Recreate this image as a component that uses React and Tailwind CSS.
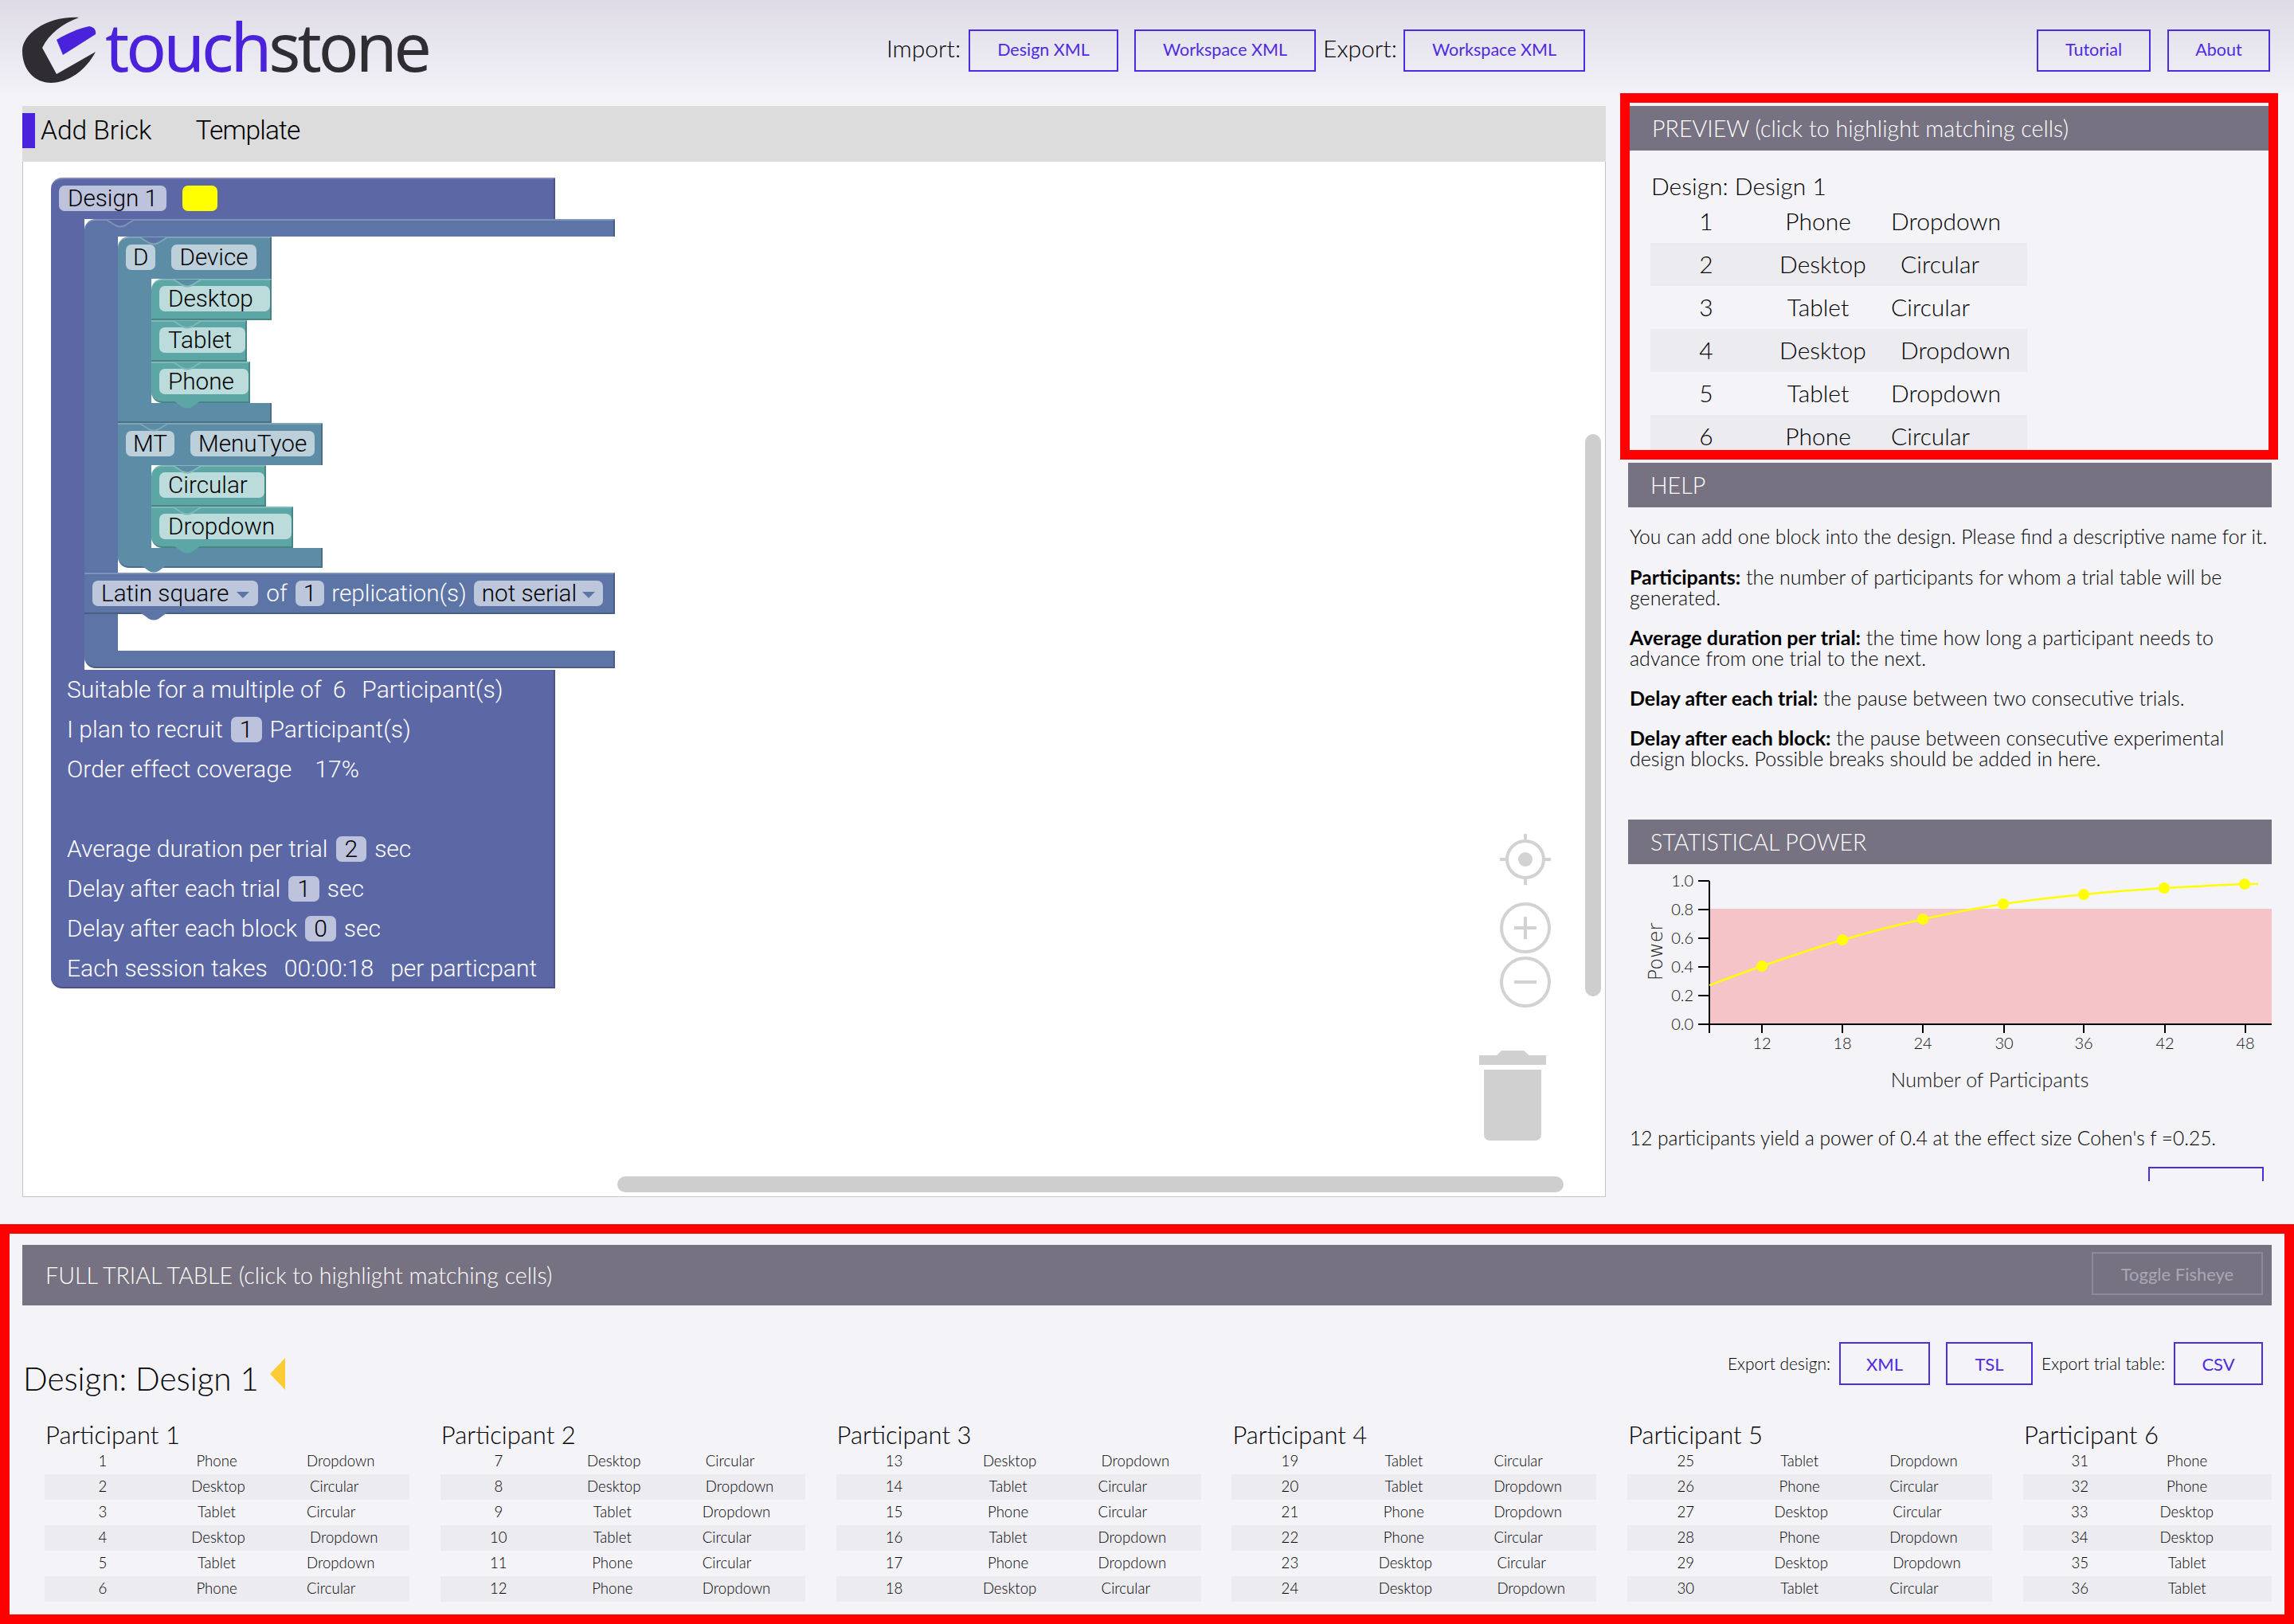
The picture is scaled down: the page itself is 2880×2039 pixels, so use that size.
import React from "react";

const ACCENT_BTN = "flex items-center justify-center border-2 border-[#4f2be0] text-[#4f2be0] font-normal";

const TONES = {
  design: { bg: "bg-[#5c67a6]", edge: "border-t-2 border-t-[#8089b9]", side: "border-r-2 border-b-2 border-r-[#4a5385] border-b-[#4a5385]", field: "bg-[#bdc2dd]", hex: "#5c67a6", line: "#8089b9" },
  block: { bg: "bg-[#5c74a6]", edge: "border-t-2 border-t-[#7f92b9]", side: "border-r-2 border-b-2 border-r-[#4a5d85] border-b-[#4a5d85]", field: "bg-[#bcc7dc]", hex: "#5c74a6", line: "#7f92b9" },
  factor: { bg: "bg-[#5c8ca6]", edge: "border-t-2 border-t-[#7fa5b9]", side: "border-r-2 border-b-2 border-r-[#4a7085] border-b-[#4a7085]", field: "bg-[#bcd0dc]", hex: "#5c8ca6", line: "#7fa5b9" },
  value: { bg: "bg-[#5ca6a6]", edge: "border-t-2 border-t-[#7fb9b9]", side: "border-r-2 border-b-2 border-r-[#4a8585] border-b-[#4a8585]", field: "bg-[#bcdbdb]", hex: "#5ca6a6", line: "#7fb9b9" },
};

const PREVIEW_ROWS = [
  [1, "Phone", "Dropdown"],
  [2, "Desktop", "Circular"],
  [3, "Tablet", "Circular"],
  [4, "Desktop", "Dropdown"],
  [5, "Tablet", "Dropdown"],
  [6, "Phone", "Circular"],
];

const PARTICIPANTS = [
  { name: "Participant 1", rows: PREVIEW_ROWS },
  {
    name: "Participant 2",
    rows: [
      [7, "Desktop", "Circular"],
      [8, "Desktop", "Dropdown"],
      [9, "Tablet", "Dropdown"],
      [10, "Tablet", "Circular"],
      [11, "Phone", "Circular"],
      [12, "Phone", "Dropdown"],
    ],
  },
  {
    name: "Participant 3",
    rows: [
      [13, "Desktop", "Dropdown"],
      [14, "Tablet", "Circular"],
      [15, "Phone", "Circular"],
      [16, "Tablet", "Dropdown"],
      [17, "Phone", "Dropdown"],
      [18, "Desktop", "Circular"],
    ],
  },
  {
    name: "Participant 4",
    rows: [
      [19, "Tablet", "Circular"],
      [20, "Tablet", "Dropdown"],
      [21, "Phone", "Dropdown"],
      [22, "Phone", "Circular"],
      [23, "Desktop", "Circular"],
      [24, "Desktop", "Dropdown"],
    ],
  },
  {
    name: "Participant 5",
    rows: [
      [25, "Tablet", "Dropdown"],
      [26, "Phone", "Circular"],
      [27, "Desktop", "Circular"],
      [28, "Phone", "Dropdown"],
      [29, "Desktop", "Dropdown"],
      [30, "Tablet", "Circular"],
    ],
  },
  {
    name: "Participant 6",
    narrow: true,
    rows: [
      [31, "Phone"],
      [32, "Phone"],
      [33, "Desktop"],
      [34, "Desktop"],
      [35, "Tablet"],
      [36, "Tablet"],
    ],
  },
];

const POWER_POINTS = [
  [2146, 1237],
  [2212, 1213],
  [2313, 1180],
  [2414, 1154],
  [2515, 1135],
  [2616, 1123],
  [2717, 1115],
  [2818, 1110],
  [2835, 1110],
];

function Logo() {
  return (
    <div className="flex items-start">
      <svg width="96" height="90" viewBox="28 18 96 90" className="mt-[18px] flex-none">
        <path d="M99 22 C60 20 28 42 28 64 C28 88 44 104 64 104 C86 104 108 88 120 65 L71 93 L53 60 C62 42 78 30 99 22 Z" fill="#2f2d31" />
        <path d="M71 50 C84 42 98 36 112 33 C118 34 121 38 120 43 L79 69 Z" fill="#4a22dc" />
      </svg>
      <div className="ml-[8px] mt-[8px] text-[84px] leading-[100px] font-['Noto_Sans'] font-normal tracking-[-4px] whitespace-nowrap">
        <span className="text-[#4a22dc]">touch</span>
        <span className="text-[#2f2d31]">stone</span>
      </div>
    </div>
  );
}

function Header() {
  return (
    <div className="h-[117px] flex-none bg-gradient-to-b from-[#dedbe6] to-[#f2f1f7] flex items-start pl-[28px]">
      <Logo />
      <div className="flex items-center absolute left-[1113px] top-[37px] h-[53px] text-[30px] text-black">
        <span className="w-[103px] pb-[6px]">Import:</span>
        <button className={`${ACCENT_BTN} w-[188px] h-[53px] text-[21.5px] pb-[2px]`}>Design XML</button>
        <button className={`${ACCENT_BTN} w-[228px] h-[53px] text-[21.5px] pb-[2px] ml-[20px]`}>Workspace XML</button>
        <span className="w-[101px] ml-[9px] pb-[6px]">Export:</span>
        <button className={`${ACCENT_BTN} w-[228px] h-[53px] text-[21.5px] pb-[2px]`}>Workspace XML</button>
      </div>
      <div className="flex absolute left-[2557px] top-[37px] gap-[21px]">
        <button className={`${ACCENT_BTN} w-[143px] h-[53px] text-[21.5px] pb-[2px]`}>Tutorial</button>
        <button className={`${ACCENT_BTN} w-[129px] h-[53px] text-[21.5px] pb-[2px]`}>About</button>
      </div>
    </div>
  );
}

// V dent at the top of a block: the block above pokes its tab into it
function Notch({ parent, child, left = 28 }) {
  return (
    <svg width="34" height="11" viewBox="0 0 34 11" className="absolute -top-[2px] z-10" style={{ left }}>
      <path d="M0 1 L11 8 Q17 11 23 8 L34 1 Z" fill={TONES[parent].hex} />
      <path d="M0 1 L11 8 Q17 11 23 8 L34 1" fill="none" stroke={TONES[child].line} strokeWidth="2" />
    </svg>
  );
}

function Tab({ tone, left = 28, bottom = -9 }) {
  return (
    <svg width="34" height="11" viewBox="0 0 34 11" className="absolute z-10" style={{ left, bottom }}>
      <path d="M0 0 L11 8 Q17 11 23 8 L34 0 Z" fill={TONES[tone].hex} />
    </svg>
  );
}

function Field({ tone, children, className = "px-[11px]" }) {
  return (
    <div className={`h-[32px] rounded-[7px] flex items-center text-black flex-none ${TONES[tone].field} ${className}`}>
      {children}
    </div>
  );
}

function Caret({ tone, className = "ml-[10px]" }) {
  return (
    <svg width="16" height="8" viewBox="0 0 16 8" className={`mt-[3px] ${className}`}>
      <path d="M0 0 H16 L8 8 Z" fill={TONES[tone].hex} />
    </svg>
  );
}

function ValueBlock({ label, width, first, last }) {
  const t = TONES.value;
  return (
    <div
      className={`relative h-[52px] pl-[10px] pt-[7px] ${t.bg} ${t.edge} ${t.side} ${first ? "rounded-tl-[14px]" : ""} ${last ? "rounded-bl-[14px]" : ""}`}
      style={{ width }}
    >
      <Notch parent={first ? "factor" : "value"} child="value" />
      <Field tone="value">{label}</Field>
      {last && <Tab tone="value" bottom={-10} />}
    </div>
  );
}

function FactorBlock({ code, name, width, values, first, gap }) {
  const t = TONES.factor;
  return (
    <div className="relative" style={{ width }}>
      <div className={`relative h-[53px] pl-[10px] pt-[8px] flex ${t.bg} ${t.edge} border-r-2 border-r-[#4a7085] ${first ? "rounded-tl-[14px]" : ""}`}>
        <Notch parent={first ? "block" : "factor"} child="factor" />
        <Field tone="factor" className="px-[9px]">{code}</Field>
        <Field tone="factor" className="ml-[20px] px-[10px]">{name}</Field>
      </div>
      <div className="flex">
        <div className={`w-[42px] flex-none ${t.bg}`} />
        <div className="flex flex-col">
          {values.map((v, i) => (
            <ValueBlock key={v.label} label={v.label} width={v.width} first={i === 0} last={i === values.length - 1} />
          ))}
        </div>
      </div>
      <div className={`relative h-[25px] ${t.bg} ${t.side} ${gap ? "rounded-bl-[14px]" : ""}`}>
        {gap && <Tab tone="factor" bottom={-9} />}
      </div>
    </div>
  );
}

function DesignBlocks() {
  const d = TONES.design;
  const b = TONES.block;
  return (
    <div className="absolute left-[35px] top-[20px] w-[708px] font-['Roboto'] font-light text-[29.7px] leading-none">
      <div className={`h-[52px] w-[633px] pl-[10px] pt-[8px] flex rounded-tl-[14px] ${d.bg} ${d.edge} border-r-2 border-r-[#4a5385]`}>
        <Field tone="design">Design 1</Field>
        <div className="ml-[20px] w-[44px] h-[32px] rounded-[7px] bg-[#ffff00]" />
      </div>
      <div className="flex">
        <div className={`w-[42px] flex-none ${d.bg}`} />
        <div className="w-[666px] pb-[2px]">
          <div className={`relative h-[22px] rounded-tl-[14px] ${b.bg} ${b.edge} border-r-2 border-r-[#4a5d85]`}>
            <Notch parent="design" child="block" />
          </div>
          <div className="flex">
            <div className={`w-[42px] flex-none ${b.bg}`} />
            <div className="flex flex-col pb-[6px]">
              <FactorBlock
                first
                code="D"
                name="Device"
                width={193}
                values={[
                  { label: "Desktop", width: 151 },
                  { label: "Tablet", width: 120 },
                  { label: "Phone", width: 124 },
                ]}
              />
              <FactorBlock
                gap
                code="MT"
                name="MenuTyoe"
                width={257}
                values={[
                  { label: "Circular", width: 144 },
                  { label: "Dropdown", width: 178 },
                ]}
              />
            </div>
          </div>
          <div className={`h-[52px] pl-[10px] flex items-center text-white ${b.bg} ${b.edge} ${b.side}`}>
            <Field tone="block">
              Latin square
              <Caret tone="block" />
            </Field>
            <span className="ml-[10px]">of</span>
            <Field tone="block" className="ml-[10px] px-[10px]">1</Field>
            <span className="ml-[9px]">replication(s)</span>
            <Field tone="block" className="ml-[9px] px-[10px]">
              not serial
              <Caret tone="block" className="ml-[7px]" />
            </Field>
          </div>
          <div className="relative flex h-[46px]">
            <div className={`w-[42px] flex-none ${b.bg}`} />
            <Tab tone="block" left={70} bottom={37} />
            <div className="flex-1 rounded-l-[12px] bg-white" />
          </div>
          <div className={`h-[22px] rounded-bl-[14px] ${b.bg} ${b.side}`} />
        </div>
      </div>
      <div className={`w-[633px] h-[400px] pl-[20px] rounded-bl-[14px] text-white text-[30px] ${d.bg} border-r-2 border-b-2 border-r-[#4a5385] border-b-[#4a5385]`}>
        <div className="h-[50px] flex items-center">
          <span>Suitable for a multiple of</span>
          <span className="ml-[14px]">6</span>
          <span className="ml-[20px]">Participant(s)</span>
        </div>
        <div className="h-[50px] flex items-center gap-[10px]">
          <span>I plan to recruit</span>
          <Field tone="design">1</Field>
          <span>Participant(s)</span>
        </div>
        <div className="h-[50px] flex items-center">
          <span>Order effect coverage</span>
          <span className="ml-[29px]">17%</span>
        </div>
        <div className="h-[50px]" />
        <div className="h-[50px] flex items-center gap-[10px]">
          <span>Average duration per trial</span>
          <Field tone="design">2</Field>
          <span>sec</span>
        </div>
        <div className="h-[50px] flex items-center gap-[10px]">
          <span>Delay after each trial</span>
          <Field tone="design">1</Field>
          <span>sec</span>
        </div>
        <div className="h-[50px] flex items-center gap-[10px]">
          <span>Delay after each block</span>
          <Field tone="design">0</Field>
          <span>sec</span>
        </div>
        <div className="h-[50px] flex items-center">
          <span>Each session takes</span>
          <span className="ml-[21px]">00:00:18</span>
          <span className="ml-[21px]">per particpant</span>
        </div>
      </div>
    </div>
  );
}

function WorkspaceControls() {
  return (
    <>
      <svg width="66" height="66" viewBox="0 0 66 66" className="absolute left-[1853px] top-[843px]" fill="none" stroke="#d2d2d2" strokeWidth="4">
        <circle cx="33" cy="33" r="23" />
        <circle cx="33" cy="33" r="9" fill="#d2d2d2" stroke="none" />
        <path d="M33 1 V10 M33 56 V65 M1 33 H10 M56 33 H65" />
      </svg>
      <svg width="66" height="66" viewBox="0 0 66 66" className="absolute left-[1853px] top-[929px]" fill="none" stroke="#d2d2d2" strokeWidth="4">
        <circle cx="33" cy="33" r="30" />
        <path d="M19 33 H47 M33 19 V47" />
      </svg>
      <svg width="66" height="66" viewBox="0 0 66 66" className="absolute left-[1853px] top-[997px]" fill="none" stroke="#d2d2d2" strokeWidth="4">
        <circle cx="33" cy="33" r="30" />
        <path d="M19 33 H47" />
      </svg>
      <svg width="84" height="114" viewBox="0 0 84 114" className="absolute left-[1828px] top-[1116px]" fill="#d0d0d0">
        <path d="M0 6 H22 L28 0 H56 L63 6 H84 V18 H0 Z" />
        <path d="M6 24 H78 V105 Q78 113 70 113 H14 Q6 113 6 105 Z" />
      </svg>
      <div className="absolute left-[1961px] top-[342px] w-[20px] h-[706px] rounded-full bg-[#cecece]" />
      <div className="absolute left-[746px] top-[1274px] w-[1188px] h-[20px] rounded-full bg-[#cecece]" />
    </>
  );
}

function Workspace() {
  return (
    <div className="w-[1988px] flex-none">
      <div className="h-[70px] bg-[#dcdcdc] flex items-center text-[33.5px] font-['Roboto'] font-light text-black">
        <div className="w-[16px] h-[44px] bg-[#4a22dc] -mt-[8px]" />
        <span className="ml-[7px] -mt-[8px]">Add Brick</span>
        <span className="ml-[55px] -mt-[8px] tracking-[-0.8px]">Template</span>
      </div>
      <div className="relative h-[1300px] bg-white border-x border-b border-[#c4c4c4] overflow-hidden">
        <DesignBlocks />
        <WorkspaceControls />
      </div>
    </div>
  );
}

function SectionHeader({ children, className = "" }) {
  return (
    <div className={`h-[56px] flex-none bg-[#767282] text-white text-[28.6px] pl-[28px] flex items-center ${className}`}>
      {children}
    </div>
  );
}

function Preview() {
  return (
    <div className="h-[460px] w-[826px] flex-none border-[12px] border-[#ff0000] pt-[4px] overflow-hidden">
      <SectionHeader className="pl-[27px]">PREVIEW (click to highlight matching cells)</SectionHeader>
      <div className="pl-[26px] pt-[26px] text-[30px] text-black">
        <div className="h-[36px] pl-[1px] flex items-center">Design: Design 1</div>
        <div className="w-[473px]">
          {PREVIEW_ROWS.map(([n, a, b], i) => (
            <div key={n} className={`h-[54px] pb-[1px] flex items-center ${i % 2 ? "bg-[#ecebf0]" : ""}`}>
              <div className="w-[119px] pl-[21px] text-center">{n}</div>
              <div className={`text-center ${a === "Desktop" ? "w-[195px]" : "w-[183px]"}`}>{a}</div>
              <div>{b}</div>
            </div>
          ))}
        </div>
      </div>
    </div>
  );
}

function Help() {
  return (
    <div className="h-[392px] pt-[24px] pl-[2px] text-[25px] leading-[26px] text-black">
      <p className="whitespace-nowrap text-[24.7px]">You can add one block into the design. Please find a descriptive name for it.</p>
      <p className="mt-[24px]">
        <b className="font-bold">Participants:</b> the number of participants for whom a trial table will be
        <br />
        generated.
      </p>
      <p className="mt-[24px]">
        <b className="font-bold">Average duration per trial:</b> the time how long a participant needs to
        <br />
        advance from one trial to the next.
      </p>
      <p className="mt-[24px]">
        <b className="font-bold">Delay after each trial:</b> the pause between two consecutive trials.
      </p>
      <p className="mt-[24px]">
        <b className="font-bold">Delay after each block:</b> the pause between consecutive experimental
        <br />
        design blocks. Possible breaks should be added in here.
      </p>
    </div>
  );
}

function smoothPath(pts) {
  let d = `M${pts[0][0]} ${pts[0][1]}`;
  for (let i = 0; i < pts.length - 1; i++) {
    const p0 = pts[i - 1] || pts[i];
    const p1 = pts[i];
    const p2 = pts[i + 1];
    const p3 = pts[i + 2] || p2;
    d += ` C${p1[0] + (p2[0] - p0[0]) / 6} ${p1[1] + (p2[1] - p0[1]) / 6} ${p2[0] - (p3[0] - p1[0]) / 6} ${p2[1] - (p3[1] - p1[1]) / 6} ${p2[0]} ${p2[1]}`;
  }
  return d;
}

function PowerChart() {
  const yTicks = [
    ["1.0", 1106],
    ["0.8", 1142],
    ["0.6", 1178],
    ["0.4", 1214],
    ["0.2", 1250],
    ["0.0", 1286],
  ];
  const xTicks = [
    ["12", 2212],
    ["18", 2313],
    ["24", 2414],
    ["30", 2516],
    ["36", 2616],
    ["42", 2718],
    ["48", 2819],
  ];
  return (
    <svg width="808" height="300" viewBox="2044 1085 808 300" className="block">
      <rect x="2146" y="1141" width="706" height="145" fill="#f5c4c9" />
      <path d="M2146 1106 V1297 M2146 1286 H2852" stroke="#000" strokeWidth="2" fill="none" />
      {yTicks.map(([label, y]) => (
        <g key={label}>
          <path d={`M2132 ${y} H2146`} stroke="#000" strokeWidth="2" />
          <text x="2126" y={y + 7} textAnchor="end" fontSize="20" fill="#111">{label}</text>
        </g>
      ))}
      {xTicks.map(([label, x]) => (
        <g key={label}>
          <path d={`M${x} 1286 V1297`} stroke="#000" strokeWidth="2" />
          <text x={x} y="1317" textAnchor="middle" fontSize="20" fill="#111">{label}</text>
        </g>
      ))}
      <text
        x="2080"
        y="1195"
        textAnchor="middle"
        fontSize="24"
        fill="#222"
        transform="rotate(-90 2080 1195)"
        dominantBaseline="middle"
        fontFamily="DejaVu Sans"
      >
        Power
      </text>
      <text x="2498" y="1365" textAnchor="middle" fontSize="25" fill="#111">Number of Participants</text>
      <path d={smoothPath(POWER_POINTS)} fill="none" stroke="#ffff00" strokeWidth="2.5" />
      {POWER_POINTS.slice(1, 8).map(([x, y]) => (
        <circle key={x} cx={x} cy={y} r="7" fill="#ffff00" />
      ))}
    </svg>
  );
}

function SidePanel() {
  return (
    <div className="ml-[18px] w-[826px] flex-none flex flex-col -mt-[16px] overflow-hidden h-[1366px]">
      <Preview />
      <div className="ml-[10px] mr-[8px] w-[808px] mt-[4px]">
        <SectionHeader>HELP</SectionHeader>
        <Help />
        <SectionHeader>STATISTICAL POWER</SectionHeader>
        <PowerChart />
        <p className="mt-[31px] pl-[2px] text-[24.5px] leading-[26px] text-black">
          12 participants yield a power of 0.4 at the effect size Cohen's f =0.25.
        </p>
        <div className="ml-[653px] mt-[23px] w-[145px] h-[18px] border-t-2 border-x-2 border-[#4f2be0]" />
      </div>
    </div>
  );
}

function TrialColumn({ name, rows, narrow }) {
  return (
    <div className={`flex-none ${narrow ? "w-[312px]" : "w-[458px]"}`}>
      <div className="h-[36px] pl-[1px] text-[31px] leading-[36px] text-black">{name}</div>
      {rows.map(([n, a, b], i) => (
        <div key={n} className={`h-[32px] pb-[1px] flex items-center text-[18.6px] text-black ${i % 2 ? "bg-[#ecebf0]" : ""}`}>
          <div className="w-[103px] pl-[43px] text-center">{n}</div>
          <div className={`text-center ${a === "Desktop" ? "w-[230px]" : "w-[226px]"}`}>{a}</div>
          {b && <div>{b}</div>}
        </div>
      ))}
    </div>
  );
}

function TrialTable() {
  return (
    <div className="h-[502px] flex-none border-[12px] border-[#ff0000] pt-[14px] overflow-hidden">
      <div className="ml-[16px] w-[2824px] h-[76px] bg-[#767282] pl-[29px] pr-[11px] flex items-center justify-between text-white text-[28.6px]">
        <span>FULL TRIAL TABLE (click to highlight matching cells)</span>
        <button className="w-[215px] h-[54px] border-2 border-[#8e8b99] text-[#aaa8b3] text-[22px] font-normal -mt-[4px]">Toggle Fisheye</button>
      </div>
      <div className="mt-[46px] h-[98px] pl-[17px] pr-[27px] flex justify-between">
        <div className="flex items-center h-[48px] mt-[22px] text-[40.4px] text-black">
          Design: Design 1
          <svg width="19" height="40" viewBox="0 0 19 40" className="ml-[14px] -mt-[12px]">
            <path d="M19 0 V40 L0 20 Z" fill="#fecb36" />
          </svg>
        </div>
        <div className="flex items-center h-[54px] text-[21px] text-black">
          <span className="mr-[11px]">Export design:</span>
          <button className={`${ACCENT_BTN} w-[114px] h-[54px] text-[22px]`}>XML</button>
          <button className={`${ACCENT_BTN} w-[109px] h-[54px] ml-[20px] text-[22px]`}>TSL</button>
          <span className="ml-[11px] mr-[11px]">Export trial table:</span>
          <button className={`${ACCENT_BTN} w-[112px] h-[54px] text-[22px]`}>CSV</button>
        </div>
      </div>
      <div className="ml-[44px] w-[2796px] overflow-hidden flex gap-[38.8px]">
        {PARTICIPANTS.map((p) => (
          <TrialColumn key={p.name} {...p} />
        ))}
      </div>
    </div>
  );
}

export default function App() {
  return (
    <div className="relative w-[2880px] h-[2039px] overflow-hidden bg-[#f3f3f8] flex flex-col font-['Lato'] font-light">
      <Header />
      <div className="h-[1420px] flex-none pt-[16px] pl-[28px] flex items-start">
        <Workspace />
        <SidePanel />
      </div>
      <TrialTable />
    </div>
  );
}
